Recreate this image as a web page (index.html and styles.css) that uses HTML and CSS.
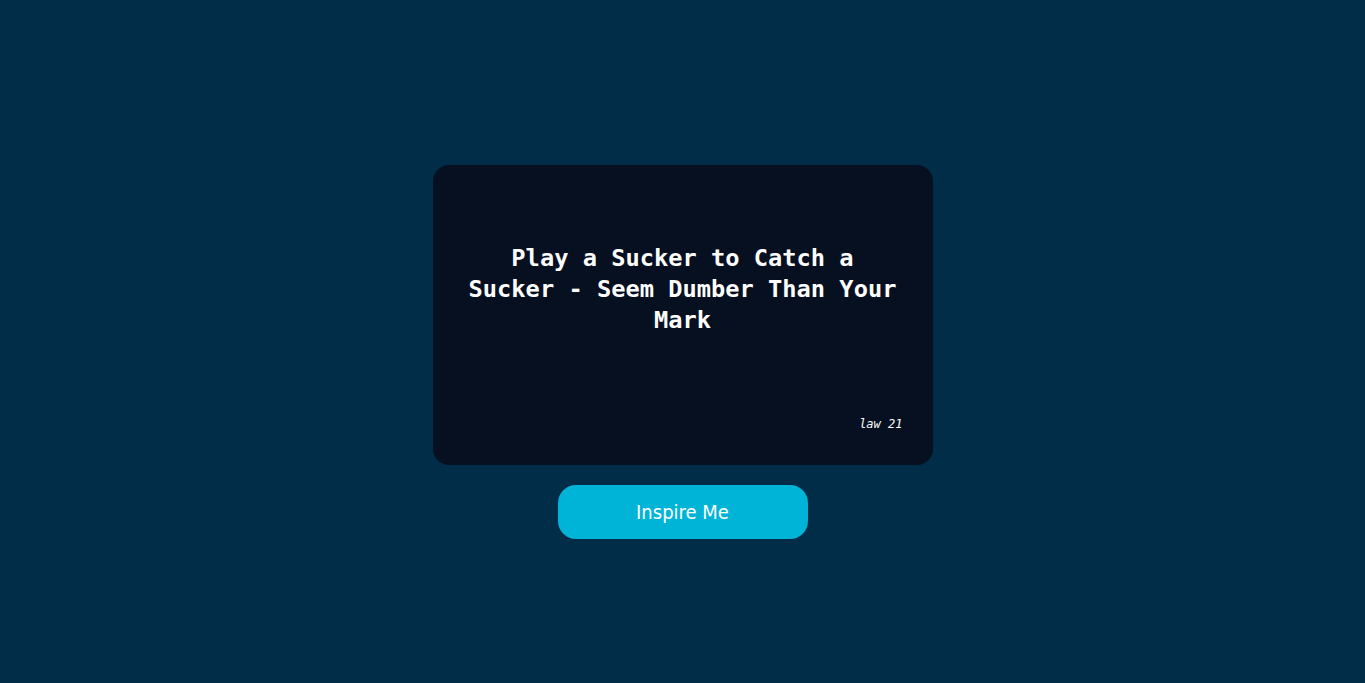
FILE: index.html
```html
<!DOCTYPE html>
<html lang="en">
<head>
<meta charset="utf-8">
<title>48 Laws</title>
<link rel="stylesheet" href="styles.css">
</head>
<body>
<main class="page">
  <section class="card">
    <h1 class="quote">Play a Sucker to Catch a Sucker - Seem Dumber Than Your Mark</h1>
    <p class="law">law 21</p>
  </section>
  <button class="btn" type="button">Inspire Me</button>
</main>
</body>
</html>
```
FILE: styles.css
```css
html, body {
  margin: 0;
  padding: 0;
  background: #012d48;
}
.page {
  box-sizing: border-box;
  height: 100vh;
  padding-top: 21px;
  display: flex;
  flex-direction: column;
  align-items: center;
  justify-content: center;
  gap: 20px;
}
.card {
  box-sizing: border-box;
  width: 500px;
  height: 300px;
  background: #061021;
  border-radius: 16px;
  padding: 30px;
  display: flex;
  flex-direction: column;
}
.quote {
  margin: 48px 0 0;
  font-family: "DejaVu Sans Mono", monospace;
  font-weight: bold;
  font-size: 23.7px;
  line-height: 31px;
  color: #ffffff;
  text-align: center;
}
.law {
  margin: auto 0 0;
  align-self: flex-end;
  font-family: "DejaVu Sans Mono", monospace;
  font-style: italic;
  font-size: 12px;
  line-height: 14px;
  color: #ffffff;
  padding-bottom: 4px;
}
.btn {
  width: 250px;
  height: 54px;
  border: none;
  border-radius: 18px;
  background: #00b4d8;
  color: #ffffff;
  font-family: "DejaVu Sans Condensed", "DejaVu Sans", sans-serif;
  font-stretch: condensed;
  font-size: 20px;
  cursor: pointer;
}
```
